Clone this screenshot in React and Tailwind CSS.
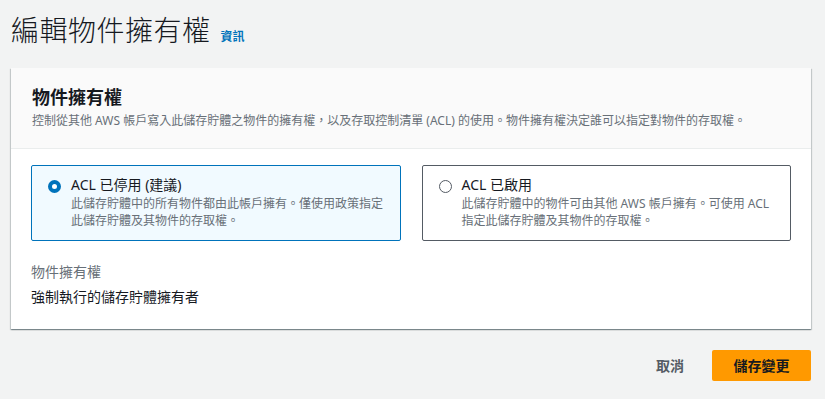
export default function App() {
  const font = { fontFamily: '"Noto Sans", "Noto Sans CJK TC", sans-serif' };
  return (
    <div className="min-h-[399px] w-[825px] bg-[#f2f3f3] text-[#16191f]" style={font}>
      <div className="flex items-end gap-[10px] pl-[11px] pt-[7px] h-[55px]">
        <h1 className="text-[28px] leading-[36px] font-light text-[#16191f] tracking-[0.5px] mb-[7px]">編輯物件擁有權</h1>
        <a className="text-[12px] leading-[18px] font-bold text-[#0073bb] mb-[9px]">資訊</a>
      </div>
      <div className="mt-[13px] ml-[11px] w-[800px] bg-white shadow-[0_1px_1px_0_rgba(0,28,36,0.3),1px_1px_1px_0_rgba(0,28,36,0.15),-1px_1px_1px_0_rgba(0,28,36,0.15)]">
        <div className="bg-[#fafafa] border-b border-[#eaeded] px-[21px] pt-[17px] pb-[18px]">
          <h2 className="text-[18px] leading-[24px] font-bold text-[#16191f]">物件擁有權</h2>
          <p className="text-[12px] leading-[18px] text-[#687078] mt-[3px]">控制從其他 AWS 帳戶寫入此儲存貯體之物件的擁有權，以及存取控制清單 (ACL) 的使用。物件擁有權決定誰可以指定對物件的存取權。</p>
        </div>
        <div className="px-[20px] pt-[16px] pb-[21px]">
          <div className="grid grid-cols-2 gap-[21px]">
            <div className="h-[76px] border border-[#0073bb] bg-[#f1faff] rounded-[2px] px-[16px] pt-[9px] flex gap-[10px]">
              <div className="mt-[5px] w-[13px] h-[13px] rounded-full border-[4px] border-[#0073bb] bg-white shrink-0"></div>
              <div>
                <div className="text-[14px] leading-[20px] text-[#16191f]">ACL 已停用 (建議)</div>
                <div className="text-[12px] leading-[17px] text-[#687078]">此儲存貯體中的所有物件都由此帳戶擁有。僅使用政策指定此儲存貯體及其物件的存取權。</div>
              </div>
            </div>
            <div className="h-[76px] border border-[#545b64] bg-white rounded-[2px] px-[16px] pt-[9px] flex gap-[10px]">
              <div className="mt-[5px] w-[13px] h-[13px] rounded-full border border-[#545b64] bg-white shrink-0"></div>
              <div>
                <div className="text-[14px] leading-[20px] text-[#16191f]">ACL 已啟用</div>
                <div className="text-[12px] leading-[17px] text-[#687078]">此儲存貯體中的物件可由其他 AWS 帳戶擁有。可使用 ACL 指定此儲存貯體及其物件的存取權。</div>
              </div>
            </div>
          </div>
          <div className="mt-[20px] text-[14px] leading-[22px] text-[#687078]">物件擁有權</div>
          <div className="mt-[3px] text-[14px] leading-[22px] text-[#16191f]">強制執行的儲存貯體擁有者</div>
        </div>
      </div>
      <div className="flex justify-end items-center gap-[28px] pr-[14px] mt-[21px]">
        <button className="text-[14px] font-semibold text-[#545b64] leading-[20px]">取消</button>
        <button className="h-[31px] w-[99px] bg-[#ff9900] rounded-[2px] text-[14px] font-semibold text-[#16191f]">儲存變更</button>
      </div>
    </div>
  );
}
